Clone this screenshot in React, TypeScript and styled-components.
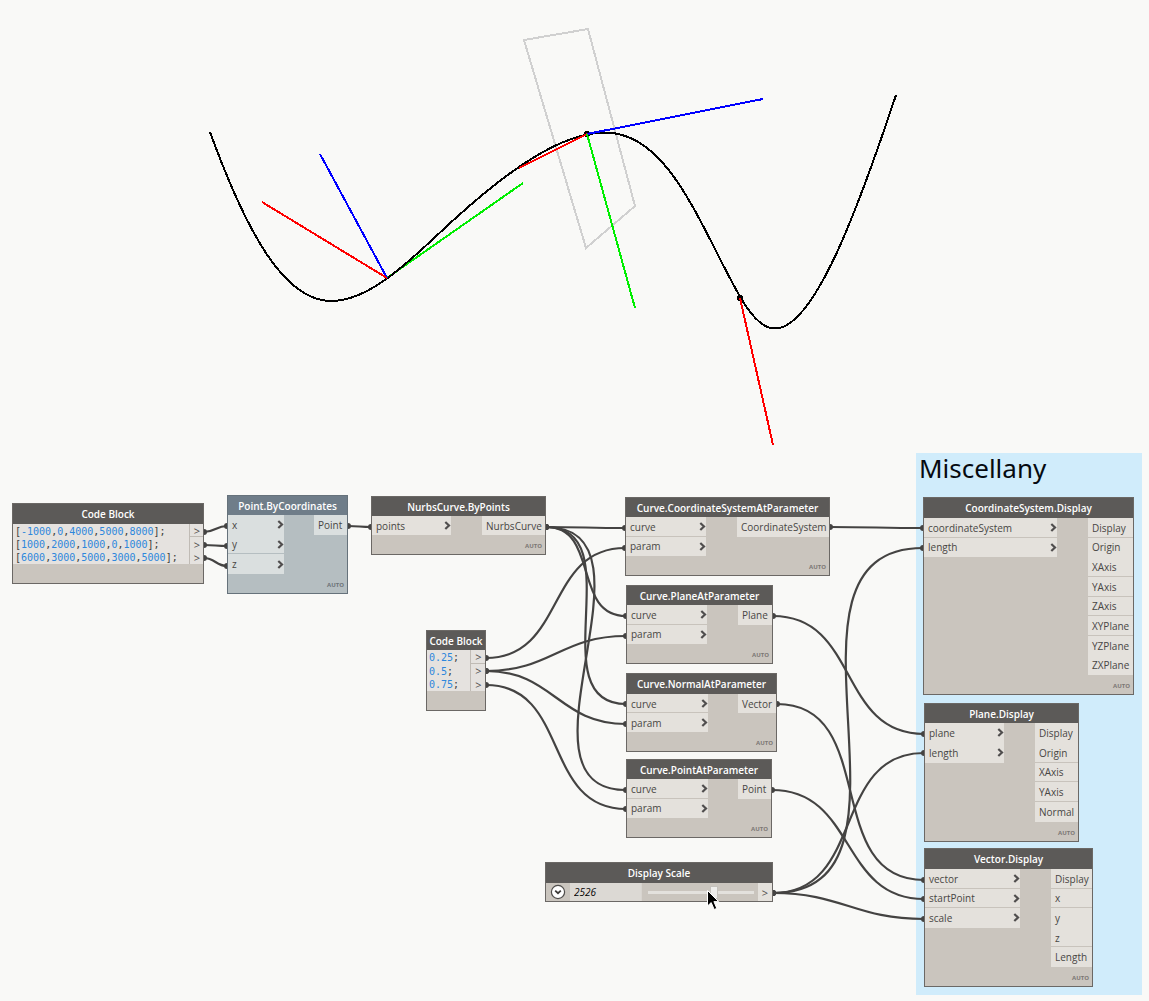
import React, { Fragment } from "react";
import styled, { createGlobalStyle, css } from "styled-components";

type Point = [number, number];
type Port = { label: string; rule?: boolean };
type NodeSpec = {
  title: string;
  x: number;
  y: number;
  w: number;
  h: number;
  head?: number;
  inW: number;
  outW: number;
  inputs: Port[];
  outputs: Port[];
  selected?: boolean;
};
type CodeSpec = {
  title: string;
  x: number;
  y: number;
  w: number;
  h: number;
  head: number;
  foot: number;
  outW: number;
  lines: string[];
};

const GlobalStyle = createGlobalStyle`
  *, *::before, *::after { box-sizing: border-box; }
  body {
    margin: 0;
    background: #f9f9f7;
    font-family: "Open Sans", "Noto Sans", sans-serif;
  }
`;

const Canvas = styled.main`
  position: relative;
  width: 100%;
  min-height: 100vh;
  overflow: hidden;
  background: #f9f9f7;
`;

const Layer = styled.svg`
  position: absolute;
  inset: 0;
  width: 100%;
  height: 100%;
  pointer-events: none;
`;

const place = css<{ $x: number; $y: number; $w: number; $h: number }>`
  position: absolute;
  left: ${(p) => p.$x}px;
  top: ${(p) => p.$y}px;
  width: ${(p) => p.$w}px;
  height: ${(p) => p.$h}px;
`;

const Group = styled.section`
  ${place}
  background: #d0ecfb;
`;

const GroupTitle = styled.h2`
  margin: 0;
  padding: 0 3px;
  color: #060a10;
  font-family: "Noto Sans", "Open Sans", sans-serif;
  font-size: 26px;
  font-weight: 400;
  line-height: 30px;
`;

const NodeBox = styled.article<{ $selected?: boolean }>`
  ${place}
  display: flex;
  flex-direction: column;
  border: 1px solid ${(p) => (p.$selected ? "#66727b" : "#6b6865")};
  background: ${(p) => (p.$selected ? "#b5bec1" : "#cac5be")};
`;

const NodeTitle = styled.h3<{ $height: number; $selected?: boolean }>`
  display: flex;
  align-items: center;
  justify-content: center;
  flex: none;
  height: ${(p) => p.$height}px;
  margin: 0;
  background: ${(p) => (p.$selected ? "#6f7d89" : "#5c5a58")};
  color: #fff;
  font-size: 10px;
  font-weight: 600;
  line-height: 16px;
  white-space: nowrap;
`;

const Ports = styled.div<{ $rows: number; $inW: number; $outW: number }>`
  display: grid;
  flex: 1;
  min-height: 0;
  grid-template-columns: ${(p) => p.$inW}px 1fr ${(p) => p.$outW}px;
  grid-template-rows: repeat(${(p) => p.$rows}, minmax(0, 1fr));
`;

const PortCell = styled.div<{ $side: "in" | "out"; $row: number; $rule?: boolean; $selected?: boolean }>`
  grid-column: ${(p) => (p.$side === "in" ? 1 : 3)};
  grid-row: ${(p) => p.$row};
  display: flex;
  align-items: center;
  justify-content: space-between;
  padding: 1px 0 0 4px;
  border-bottom: 1px solid
    ${(p) => (p.$rule ? (p.$selected ? "#b5bec1" : "#c8c3bc") : "transparent")};
  background: ${(p) => (p.$selected ? "#dadfdf" : "#e4e1dc")};
  color: #484644;
  font-size: 10px;
  line-height: 16px;
  white-space: nowrap;
`;

const Footer = styled.footer<{ $selected?: boolean }>`
  flex: none;
  height: 19px;
  padding: 0 3px;
  color: ${(p) => (p.$selected ? "#6c7378" : "#7b7774")};
  font-size: 6px;
  font-weight: 700;
  line-height: 22px;
  text-align: right;
`;

const CodeBody = styled.div<{ $outW: number; $foot: number }>`
  display: grid;
  flex: 1;
  min-height: 0;
  grid-template-columns: 1fr ${(p) => p.$outW}px;
  grid-template-rows: repeat(3, minmax(0, 1fr));
  margin-bottom: ${(p) => p.$foot}px;
  background: #e5e2df;
`;

const CodeLine = styled.code`
  display: flex;
  align-items: center;
  padding: 1px 0 0 2px;
  border-right: 1px solid #c0bbb5;
  color: #403e3c;
  font-family: "DejaVu Sans Mono", monospace;
  font-size: 10px;
  line-height: 13px;
`;

const NumberToken = styled.span`
  color: #2d87dc;
`;

const CodePort = styled.span<{ $rule?: boolean }>`
  display: flex;
  align-items: center;
  justify-content: center;
  padding: 2px 0 0 1px;
  border-bottom: 1px solid ${(p) => (p.$rule ? "#c0bbb5" : "transparent")};
  color: #4f4d4b;
  font-size: 11px;
  line-height: 12px;
`;

const SliderBody = styled.div`
  display: flex;
  flex: 1;
  align-items: stretch;
  min-height: 0;
`;

const ExpandButton = styled.button`
  display: flex;
  align-items: center;
  justify-content: center;
  flex: none;
  width: 24px;
  padding: 0;
  border: 0;
  background: none;
`;

const ValueInput = styled.input`
  flex: none;
  width: 72px;
  min-width: 0;
  padding: 0 4px;
  border: 0;
  border-right: 1px solid #d8d4cf;
  border-radius: 0;
  background: #dcd9d4;
  color: #000;
  font-family: "Open Sans", "Noto Sans", sans-serif;
  font-size: 10px;
  font-style: italic;
`;

const RangeCell = styled.div`
  display: flex;
  flex: 1;
  align-items: center;
  min-width: 0;
  padding: 0 4px 0 6px;
`;

const Range = styled.input`
  width: 100%;
  height: 14px;
  margin: 0;
  appearance: none;
  background: none;

  &::-webkit-slider-runnable-track {
    height: 3px;
    background: #e3e1dd;
  }

  &::-webkit-slider-thumb {
    appearance: none;
    width: 8px;
    height: 13px;
    margin-top: -5px;
    border: 1px solid #c4c1bc;
    background: #eeedeb;
  }
`;

const SliderPort = styled.span`
  display: flex;
  align-items: center;
  justify-content: center;
  flex: none;
  width: 14px;
  background: #e4e1dc;
  color: #4f4d4b;
  font-size: 11px;
`;

const Cursor = styled.svg`
  position: absolute;
  left: 706px;
  top: 889px;
  width: 14px;
  height: 22px;
`;

const ports = (labels: string, unruled: string[] = []): Port[] => {
  const names = labels.split(" ");
  return names.map((label, i) => ({
    label,
    rule: i < names.length - 1 && !unruled.includes(label),
  }));
};

const nodes: NodeSpec[] = [
  { title: "Point.ByCoordinates", x: 227, y: 495, w: 121, h: 99, inW: 56, outW: 33, inputs: ports("x y z", ["x"]), outputs: ports("Point"), selected: true },
  { title: "NurbsCurve.ByPoints", x: 371, y: 496, w: 175, h: 59, inW: 79, outW: 63, inputs: ports("points"), outputs: ports("NurbsCurve") },
  { title: "Curve.CoordinateSystemAtParameter", x: 625, y: 497, w: 205, h: 79, inW: 80, outW: 92, inputs: ports("curve param"), outputs: ports("CoordinateSystem") },
  { title: "Curve.PlaneAtParameter", x: 626, y: 585, w: 147, h: 79, inW: 80, outW: 34, inputs: ports("curve param"), outputs: ports("Plane") },
  { title: "Curve.NormalAtParameter", x: 626, y: 673, w: 151, h: 79, head: 20, inW: 81, outW: 38, inputs: ports("curve param"), outputs: ports("Vector") },
  { title: "Curve.PointAtParameter", x: 626, y: 759, w: 146, h: 79, inW: 81, outW: 33, inputs: ports("curve param"), outputs: ports("Point") },
  { title: "CoordinateSystem.Display", x: 923, y: 497, w: 211, h: 198, head: 20, inW: 133, outW: 45, inputs: ports("coordinateSystem length"), outputs: ports("Display Origin XAxis YAxis ZAxis XYPlane YZPlane ZXPlane", ["Origin", "YZPlane"]) },
  { title: "Plane.Display", x: 924, y: 703, w: 155, h: 139, inW: 79, outW: 43, inputs: ports("plane length", ["plane"]), outputs: ports("Display Origin XAxis YAxis Normal", ["Display"]) },
  { title: "Vector.Display", x: 924, y: 848, w: 169, h: 139, head: 20, inW: 95, outW: 41, inputs: ports("vector startPoint scale"), outputs: ports("Display x y z Length", ["y"]) },
];

const codeBlocks: CodeSpec[] = [
  { title: "Code Block", x: 12, y: 503, w: 192, h: 81, head: 20, foot: 19, outW: 13, lines: ["[-1000,0,4000,5000,8000];", "[1000,2000,1000,0,1000];", "[6000,3000,5000,3000,5000];"] },
  { title: "Code Block", x: 426, y: 630, w: 60, h: 81, head: 19, foot: 19, outW: 14, lines: ["0.25;", "0.5;", "0.75;"] },
];

const wires: [Point, Point][] = [
  [[204, 532], [227, 526]],
  [[204, 545], [227, 546]],
  [[204, 558], [227, 566]],
  [[348, 526], [371, 527]],
  [[546, 527], [625, 528]],
  [[546, 527], [626, 616]],
  [[546, 527], [626, 704]],
  [[546, 527], [626, 790]],
  [[486, 658], [625, 548]],
  [[486, 671], [626, 636]],
  [[486, 671], [626, 724]],
  [[486, 685], [626, 809]],
  [[830, 527], [923, 528]],
  [[773, 616], [924, 734]],
  [[777, 704], [924, 880]],
  [[772, 790], [924, 899]],
  [[773, 893], [923, 548]],
  [[773, 893], [924, 753]],
  [[773, 893], [924, 919]],
];

// Control handles are horizontal and scale with the distance between the two ports.
const wirePath = ([[x1, y1], [x2, y2]]: [Point, Point]) => {
  const offset = 0.45 * Math.hypot(x2 - x1, y2 - y1);
  return `M${x1} ${y1}C${x1 + offset} ${y1} ${x2 - offset} ${y2} ${x2} ${y2}`;
};

// Segments join at the extrema and the inflections, so the tangents stay continuous.
const nurbsCurve = [
  "M210 132",
  "C245 228 283 301 331 301",
  "C373 301 415 255 453 220.5",
  "C505 173 560 132.5 605 132.5",
  "C656 132.5 686 192 715 249",
  "C736 290 753 328.5 775 328.5",
  "C815 328.5 860 203 896 95",
].join("");

const Chevron = () => (
  <svg width="7" height="9" viewBox="0 0 7 9" aria-hidden="true">
    <path d="M1.3 1L5 4.5L1.3 8" fill="none" stroke="#504e4e" strokeWidth="2.2" />
  </svg>
);

const GraphNode = ({ node }: { node: NodeSpec }) => (
  <NodeBox $x={node.x} $y={node.y} $w={node.w} $h={node.h} $selected={node.selected}>
    <NodeTitle $height={node.head ?? 19} $selected={node.selected}>{node.title}</NodeTitle>
    <Ports $rows={Math.max(node.inputs.length, node.outputs.length)} $inW={node.inW} $outW={node.outW}>
      {node.inputs.map((port, i) => (
        <PortCell key={port.label} $side="in" $row={i + 1} $rule={port.rule} $selected={node.selected}>
          {port.label}
          <Chevron />
        </PortCell>
      ))}
      {node.outputs.map((port, i) => (
        <PortCell key={port.label} $side="out" $row={i + 1} $rule={port.rule} $selected={node.selected}>
          {port.label}
        </PortCell>
      ))}
    </Ports>
    <Footer $selected={node.selected}>AUTO</Footer>
  </NodeBox>
);

const CodeBlock = ({ block }: { block: CodeSpec }) => (
  <NodeBox $x={block.x} $y={block.y} $w={block.w} $h={block.h}>
    <NodeTitle $height={block.head}>{block.title}</NodeTitle>
    <CodeBody $outW={block.outW} $foot={block.foot}>
      {block.lines.map((line, i) => (
        <Fragment key={line}>
          <CodeLine>
            {line.split(/(-?[\d.]+)/).map((part, j) =>
              j % 2 ? <NumberToken key={j}>{part}</NumberToken> : part,
            )}
          </CodeLine>
          <CodePort $rule={i === 0}>&gt;</CodePort>
        </Fragment>
      ))}
    </CodeBody>
  </NodeBox>
);

export default function App() {
  return (
    <>
      <GlobalStyle />
      <Canvas>
        <Layer aria-hidden="true" shapeRendering="crispEdges">
          <g fill="none" strokeWidth="2">
            <path d="M524 40L588 29L635 206L586 248Z" stroke="#d0d0d0" />
            <path d="M387 278L523 183" stroke="#00ee00" />
            <path d={nurbsCurve} stroke="#000" />
            <path d="M387 278L320 154" stroke="#00f" />
            <path d="M387 278L262 202" stroke="#f00" />
            <circle cx="587" cy="134" r="3" fill="#000" stroke="none" />
            <circle cx="740" cy="298" r="3" fill="#000" stroke="none" />
            <path d="M587 134L763 99" stroke="#00f" />
            <path d="M587 134L519 168" stroke="#f00" />
            <path d="M587 134L635 308" stroke="#00ee00" />
            <path d="M740 298L773 445" stroke="#f00" />
          </g>
        </Layer>
        <Group $x={916} $y={453} $w={226} $h={542}>
          <GroupTitle>Miscellany</GroupTitle>
        </Group>
        <Layer aria-hidden="true">
          {wires.map((wire, i) => (
            <g key={i} fill="#444342">
              <path d={wirePath(wire)} fill="none" stroke="#444342" strokeWidth="2.2" />
              <circle cx={wire[0][0]} cy={wire[0][1]} r="3" />
              <circle cx={wire[1][0]} cy={wire[1][1]} r="3" />
            </g>
          ))}
        </Layer>
        {codeBlocks.map((block) => (
          <CodeBlock key={block.x} block={block} />
        ))}
        {nodes.map((node) => (
          <GraphNode key={node.title} node={node} />
        ))}
        <NodeBox $x={545} $y={862} $w={228} $h={40}>
          <NodeTitle $height={20}>Display Scale</NodeTitle>
          <SliderBody>
            <ExpandButton type="button" aria-label="Show range settings">
              <svg width="16" height="16" viewBox="0 0 16 16">
                <circle cx="8" cy="8" r="6.6" fill="#fff" stroke="#4f4d4b" strokeWidth="1.2" />
                <path d="M5.2 6.6L8 9.2L10.8 6.6" fill="none" stroke="#3c3a38" strokeWidth="1.8" />
              </svg>
            </ExpandButton>
            <ValueInput aria-label="Display scale value" defaultValue="2526" />
            <RangeCell>
              <Range type="range" aria-label="Display scale" min={0} max={4000} defaultValue={2526} />
            </RangeCell>
            <SliderPort>&gt;</SliderPort>
          </SliderBody>
        </NodeBox>
        <Cursor viewBox="0 0 14 22" aria-hidden="true">
          <path d="M1.5 1.5V17L5.2 13.6L8.2 20.5L10.8 19.4L7.9 12.6H12.6Z" fill="#000" stroke="#fff" strokeWidth="1" />
        </Cursor>
      </Canvas>
    </>
  );
}
